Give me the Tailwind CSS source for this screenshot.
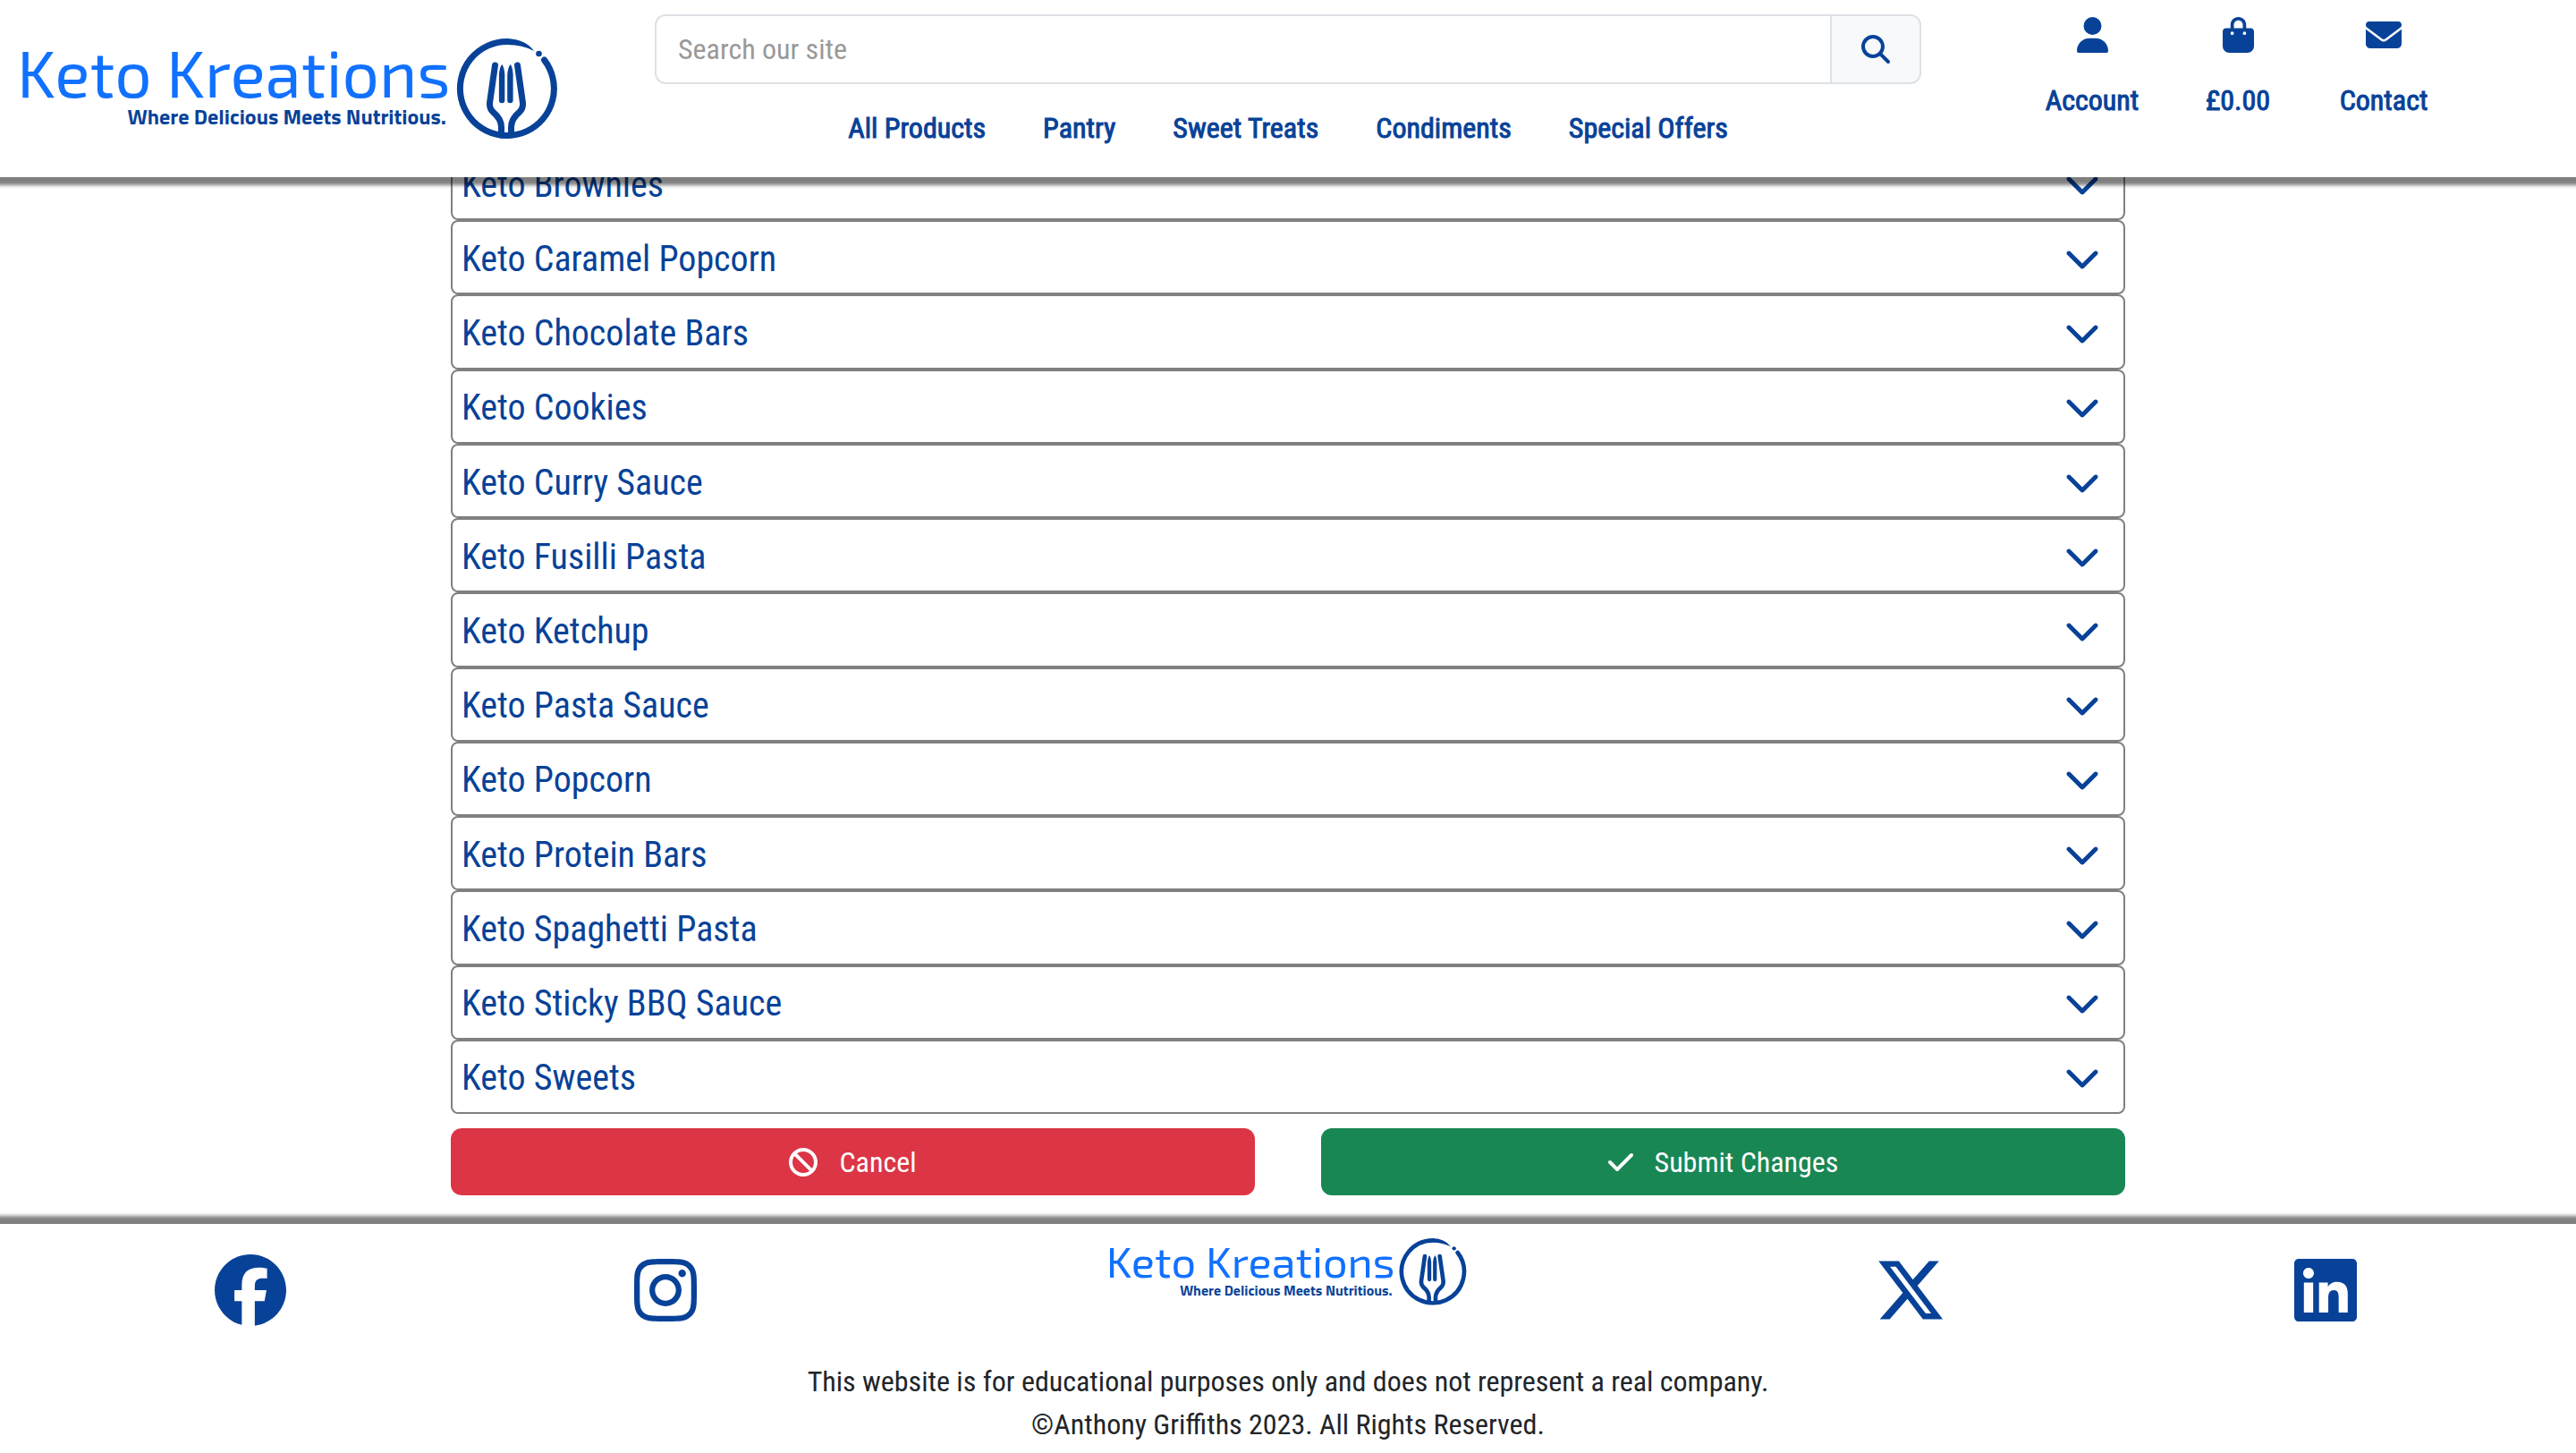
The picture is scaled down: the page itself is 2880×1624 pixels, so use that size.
<!DOCTYPE html>
<html lang="en">
<head>
<meta charset="utf-8">
<meta name="viewport" content="width=device-width, initial-scale=1">
<title>Keto Kreations</title>
<script src="https://cdn.jsdelivr.net/npm/@tailwindcss/browser@4"></script>
</head>
<body class="bg-white font-['Roboto_Condensed',Roboto,sans-serif] text-[32px] leading-[48px] text-[#212529]">

<!-- Shared symbols -->
<svg class="hidden" aria-hidden="true">
  <symbol id="chevron" viewBox="0 0 512 512"><path fill="currentColor" d="M233.4 406.6c12.5 12.5 32.8 12.5 45.3 0l192-192c12.5-12.5 12.5-32.8 0-45.3s-32.8-12.5-45.3 0L256 338.7 86.6 169.4c-12.5-12.5-32.8-12.5-45.3 0s-12.5 32.8 0 45.3l192 192z"/></symbol>
  <symbol id="fork-mark" viewBox="0 0 114 112">
    <g fill="none" stroke="currentColor" stroke-width="7" stroke-linecap="round">
      <path d="M98.500 24A52.500 52.500 0 1 1 57 3.500"/>
      <path d="M43.500 30L37.500 72Q37 78 41 82C47 87 50.500 92 50.500 99V108"/>
      <path d="M68.500 30L74.500 72Q75 78 71 82C65 87 61.500 92 61.500 99V108"/>
    </g>
    <path fill="currentColor" d="M57 0Q78 1 87 14Q74 7 57 7ZM51.200 29Q53.700 32 54.300 40V69a3.200 3.200 0 0 1-6.400 0V40Q48.500 32 51.200 29ZM60.600 29Q63.200 32 63.600 40V69a3.200 3.200 0 0 1-6.400 0V40Q58 32 60.600 29Z"/>
    <circle cx="92.500" cy="17" r="3.300" fill="currentColor"/>
  </symbol>
</svg>

<header class="relative z-10 grid grid-cols-4 bg-white px-6 text-[#084298] shadow-[0_5px_4px_4px_rgba(0,0,0,0.5)]">
  <a href="#" class="self-center" aria-label="Keto Kreations home">
    <svg class="w-[600px] max-w-full overflow-visible" viewBox="0 0 600 112">
      <text class="font-['Exo_2',Roboto,sans-serif]" x="-5" y="66" font-size="73" fill="#1171ff">Keto Kreations</text>
      <text class="font-['Titillium_Web','Exo_2',Roboto,sans-serif]" x="475" y="96" font-size="24" font-weight="700" text-anchor="end" fill="#084298">Where Delicious Meets Nutritious.</text>
      <use href="#fork-mark" x="486" y="0" width="114" height="112"/>
    </svg>
  </a>

  <div class="col-span-2 pt-4 pb-[31px]">
    <form class="flex h-[78px]" role="search">
      <input type="search" aria-label="Search our site" placeholder="Search our site" class="min-w-0 flex-1 rounded-l-xl border-2 border-r-0 border-[#dee2e6] px-6 placeholder:text-[#999]">
      <button type="button" aria-label="Search" class="flex w-[102px] items-center justify-center rounded-r-xl border-2 border-[#dee2e6] bg-[#f8f9fa]">
        <svg class="size-8" viewBox="0 0 512 512"><path fill="currentColor" d="M416 208c0 45.900-14.900 88.300-40 122.700L502.600 457.400c12.500 12.500 12.500 32.800 0 45.300s-32.800 12.500-45.300 0L330.700 376c-34.400 25.200-76.800 40-122.700 40C93.100 416 0 322.900 0 208S93.100 0 208 0S416 93.100 416 208zM208 352a144 144 0 1 0 0-288 144 144 0 1 0 0 288z"/></svg>
      </button>
    </form>
    <nav class="mt-[25px] flex justify-center gap-16 [-webkit-text-stroke:1px]">
      <a href="#">All Products</a>
      <a href="#">Pantry</a>
      <a href="#">Sweet Treats</a>
      <a href="#">Condiments</a>
      <a href="#">Special Offers</a>
    </nav>
  </div>

  <nav class="flex justify-center pt-[19px] [-webkit-text-stroke:1px]" aria-label="Account">
    <a href="#" class="flex w-[163px] flex-col items-center gap-[29px]">
      <svg class="h-10" viewBox="0 0 448 512"><path fill="currentColor" d="M224 256A128 128 0 1 0 224 0a128 128 0 1 0 0 256zm-45.700 48C79.800 304 0 383.800 0 482.300C0 498.700 13.300 512 29.700 512l388.600 0c16.400 0 29.700-13.300 29.700-29.700C448 383.800 368.200 304 269.700 304l-91.400 0z"/></svg>
      Account
    </a>
    <a href="#" class="flex w-[163px] flex-col items-center gap-[29px]">
      <svg class="h-10" viewBox="0 0 448 512"><path fill="currentColor" d="M160 112c0-35.300 28.700-64 64-64s64 28.700 64 64l0 48-128 0 0-48zm-48 48l-64 0c-26.500 0-48 21.500-48 48L0 416c0 53 43 96 96 96l256 0c53 0 96-43 96-96l0-208c0-26.500-21.500-48-48-48l-64 0 0-48C336 50.100 285.900 0 224 0S112 50.100 112 112l0 48zm24 48a24 24 0 1 1 0 48 24 24 0 1 1 0-48zm152 24a24 24 0 1 1 48 0 24 24 0 1 1 -48 0z"/></svg>
      £0.00
    </a>
    <a href="#" class="flex w-[163px] flex-col items-center gap-[29px]">
      <svg class="h-10" viewBox="0 0 512 512"><path fill="currentColor" d="M48 64C21.500 64 0 85.500 0 112c0 15.100 7.100 29.300 19.200 38.400L236.800 313.600c11.400 8.500 27 8.500 38.400 0L492.800 150.400c12.100-9.100 19.200-23.300 19.200-38.400c0-26.500-21.500-48-48-48L48 64zM0 176L0 384c0 35.300 28.700 64 64 64l384 0c35.300 0 64-28.700 64-64l0-208L294.400 339.200c-22.800 17.100-54 17.100-76.800 0L0 176z"/></svg>
      Contact
    </a>
  </nav>
</header>

<main class="mx-auto -mt-[35px] mb-8 w-[65%]">
  <ul id="products" class="grid min-h-[1082px] auto-rows-fr text-[40px] text-[#084298]"></ul>
  <div class="mt-4 grid grid-cols-2 gap-[74px] text-white">
    <button type="button" class="flex h-[75px] items-center justify-center gap-6 rounded-xl bg-[#dc3545]">
      <svg class="size-8" viewBox="0 0 512 512"><path fill="currentColor" d="M367.200 412.500L99.500 144.800C77.100 176.100 64 214.500 64 256c0 106 86 192 192 192c41.500 0 79.900-13.100 111.200-35.500zm45.300-45.300C434.900 335.900 448 297.500 448 256c0-106-86-192-192-192c-41.500 0-79.900 13.100-111.200 35.500L412.500 367.200zM0 256a256 256 0 1 1 512 0A256 256 0 1 1 0 256z"/></svg>
      Cancel
    </button>
    <button type="submit" class="flex h-[75px] items-center justify-center gap-6 rounded-xl bg-[#198754]">
      <svg class="h-8" viewBox="0 0 448 512"><path fill="currentColor" d="M438.600 105.400c12.500 12.500 12.500 32.800 0 45.300l-256 256c-12.500 12.500-32.800 12.500-45.300 0l-128-128c-12.500-12.500-12.500-32.800 0-45.300s32.800-12.500 45.300 0L160 338.700 393.400 105.400c12.500-12.500 32.800-12.500 45.300 0z"/></svg>
      Submit Changes
    </button>
  </div>
</main>

<footer class="bg-white px-12 pt-4 pb-2 text-center shadow-[0_-5px_4px_4px_rgba(0,0,0,0.5)]">
  <div class="grid h-[136px] grid-cols-12 justify-items-center text-[#084298]">
    <a href="#" aria-label="Facebook" class="col-span-2 pt-[18px]"><svg class="h-20" viewBox="0 0 512 512"><path fill="currentColor" d="M512 256C512 114.600 397.400 0 256 0S0 114.600 0 256C0 376 82.700 476.800 194.200 504.500V334.200H141.400V256h52.800V222.300c0-87.100 39.400-127.500 125-127.500c16.200 0 44.200 3.200 55.700 6.400V172c-6-.6-16.500-1-29.600-1c-42 0-58.200 15.900-58.200 57.200V256h83.600l-14.400 78.200H287V510.100C413.800 494.800 512 386.900 512 256h0z"/></svg></a>
    <a href="#" aria-label="Instagram" class="col-span-2 pt-[18px]"><svg class="h-20" viewBox="0 0 448 512"><path fill="currentColor" d="M224.100 141c-63.600 0-114.900 51.300-114.900 114.900s51.300 114.900 114.900 114.900S339 319.500 339 255.900 287.700 141 224.100 141zm0 189.600c-41.100 0-74.700-33.500-74.700-74.700s33.500-74.700 74.700-74.700 74.700 33.500 74.700 74.700-33.600 74.700-74.700 74.700zm146.400-194.300c0 14.900-12 26.800-26.800 26.800-14.900 0-26.800-12-26.800-26.800s12-26.800 26.800-26.800 26.800 12 26.800 26.800zm76.100 27.200c-1.700-35.900-9.900-67.700-36.200-93.900-26.200-26.200-58-34.400-93.900-36.200-37-2.100-147.900-2.100-184.900 0-35.800 1.700-67.600 9.900-93.900 36.100s-34.400 58-36.200 93.900c-2.100 37-2.100 147.900 0 184.900 1.700 35.900 9.900 67.700 36.200 93.900s58 34.400 93.900 36.200c37 2.100 147.900 2.100 184.900 0 35.900-1.700 67.700-9.900 93.900-36.200 26.200-26.200 34.400-58 36.200-93.900 2.100-37 2.100-147.800 0-184.800zM398.800 388c-7.800 19.600-22.900 34.700-42.600 42.600-29.500 11.700-99.500 9-132.100 9s-102.700 2.600-132.100-9c-19.600-7.800-34.700-22.900-42.600-42.600-11.700-29.500-9-99.500-9-132.100s-2.600-102.700 9-132.100c7.800-19.600 22.900-34.700 42.600-42.600 29.500-11.700 99.500-9 132.100-9s102.700-2.600 132.100 9c19.600 7.800 34.700 22.900 42.600 42.600 11.700 29.500 9 99.500 9 132.100s2.700 102.700-9 132.100z"/></svg></a>
    <a href="#" class="col-span-4" aria-label="Keto Kreations home">
      <svg class="w-[400px] overflow-visible" viewBox="0 0 600 112">
        <text class="font-['Exo_2',Roboto,sans-serif]" x="-5" y="66" font-size="73" fill="#1171ff">Keto Kreations</text>
        <text class="font-['Titillium_Web','Exo_2',Roboto,sans-serif]" x="475" y="96" font-size="24" font-weight="700" text-anchor="end" fill="#084298">Where Delicious Meets Nutritious.</text>
        <use href="#fork-mark" x="486" y="0" width="114" height="112"/>
      </svg>
    </a>
    <a href="#" aria-label="X" class="col-span-2 pt-[18px]"><svg class="h-20" viewBox="0 0 512 512"><path fill="currentColor" d="M389.200 48h70.600L305.600 224.200 487 464H345L233.700 318.600 106.500 464H35.800L200.700 275.500 26.800 48H172.400L272.900 180.900 389.200 48zM364.400 421.800h39.100L151.100 88h-42L364.400 421.800z"/></svg></a>
    <a href="#" aria-label="LinkedIn" class="col-span-2 pt-[18px]"><svg class="h-20" viewBox="0 0 448 512"><path fill="currentColor" d="M416 32H31.900C14.300 32 0 46.500 0 64.300v383.400C0 465.500 14.300 480 31.900 480H416c17.600 0 32-14.500 32-32.300V64.300c0-17.800-14.400-32.300-32-32.300zM135.400 416H69V202.200h66.500V416zm-33.200-243c-21.300 0-38.500-17.300-38.500-38.500S80.900 96 102.200 96c21.200 0 38.500 17.300 38.500 38.500 0 21.300-17.200 38.500-38.500 38.500zm282.100 243h-66.400V312c0-24.800-.5-56.700-34.500-56.700-34.600 0-39.900 27-39.900 54.900V416h-66.400V202.200h63.700v29.200h.9c8.900-16.800 30.600-34.500 62.200-34.500 66.500 0 78.900 43.600 78.900 84.900V416z"/></svg></a>
  </div>
  <p>This website is for educational purposes only and does not represent a real company.</p>
  <p>©Anthony Griffiths 2023. All Rights Reserved.</p>
</footer>

<script>
  const products = [
    'Keto Brownies', 'Keto Caramel Popcorn', 'Keto Chocolate Bars', 'Keto Cookies',
    'Keto Curry Sauce', 'Keto Fusilli Pasta', 'Keto Ketchup', 'Keto Pasta Sauce',
    'Keto Popcorn', 'Keto Protein Bars', 'Keto Spaghetti Pasta', 'Keto Sticky BBQ Sauce',
    'Keto Sweets',
  ];
  document.getElementById('products').innerHTML = products.map((name) => `
    <li>
      <button type="button" aria-expanded="false" class="flex h-full w-full items-center justify-between rounded-lg border-2 border-[#808080] pr-[26px] pl-[10px]">
        <span class="pt-1">${name}</span>
        <svg class="size-10"><use href="#chevron"/></svg>
      </button>
    </li>`).join('');
</script>
</body>
</html>
